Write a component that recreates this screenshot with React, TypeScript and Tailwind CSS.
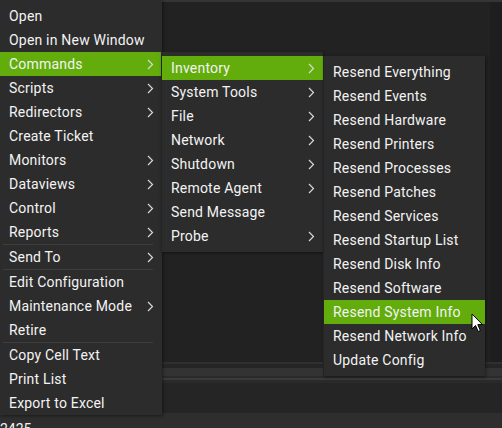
import React from "react";

type Item = { label: string; sub?: boolean; active?: boolean; sepBefore?: boolean };

const mainItems: Item[] = [
  { label: "Open" },
  { label: "Open in New Window" },
  { label: "Commands", sub: true, active: true },
  { label: "Scripts", sub: true },
  { label: "Redirectors", sub: true },
  { label: "Create Ticket" },
  { label: "Monitors", sub: true },
  { label: "Dataviews", sub: true },
  { label: "Control", sub: true },
  { label: "Reports", sub: true },
  { label: "Send To", sub: true, sepBefore: true },
  { label: "Edit Configuration", sepBefore: true },
  { label: "Maintenance Mode", sub: true },
  { label: "Retire" },
  { label: "Copy Cell Text", sepBefore: true },
  { label: "Print List" },
  { label: "Export to Excel" },
];

const commandItems: Item[] = [
  { label: "Inventory", sub: true, active: true },
  { label: "System Tools", sub: true },
  { label: "File", sub: true },
  { label: "Network", sub: true },
  { label: "Shutdown", sub: true },
  { label: "Remote Agent", sub: true },
  { label: "Send Message" },
  { label: "Probe", sub: true },
];

const inventoryItems: Item[] = [
  { label: "Resend Everything" },
  { label: "Resend Events" },
  { label: "Resend Hardware" },
  { label: "Resend Printers" },
  { label: "Resend Processes" },
  { label: "Resend Patches" },
  { label: "Resend Services" },
  { label: "Resend Startup List" },
  { label: "Resend Disk Info" },
  { label: "Resend Software" },
  { label: "Resend System Info", active: true },
  { label: "Resend Network Info" },
  { label: "Update Config" },
];

const Chevron = () => (
  <svg width="7" height="11" viewBox="0 0 7 11" className="shrink-0">
    <polyline points="1,1 5.5,5.5 1,10" fill="none" stroke="#d8d8d8" strokeWidth="1.2" />
  </svg>
);

const MenuRow = ({ item }: { item: Item }) => (
  <>
    {item.sepBefore && <div className="ml-[3px] mr-[9px] h-px bg-[#3d3d3d]" />}
    <div
      className={`flex h-6 items-center justify-between pl-[9px] pr-[8px] ${
        item.active ? "bg-[#62ad0c]" : ""
      }`}
    >
      <span className="whitespace-nowrap">{item.label}</span>
      {item.sub && <Chevron />}
    </div>
  </>
);

const Menu = ({ items, className }: { items: Item[]; className: string }) => (
  <div
    className={`absolute w-[162px] bg-[#2c2c2c] text-[14px] leading-4 tracking-[0.2px] text-[#f3f3f3] shadow-[1px_1px_3px_rgba(0,0,0,0.45)] ${className}`}
  >
    {items.map((item) => (
      <MenuRow key={item.label} item={item} />
    ))}
  </div>
);

const Cursor = () => (
  <svg
    width="14"
    height="21"
    viewBox="0 0 14 21"
    className="absolute left-[471px] top-[313px]"
  >
    <path
      d="M1 1 L1 16 L4.5 12.5 L7.2 18.5 L9.4 17.5 L6.8 11.6 L11.5 11.6 Z"
      fill="#ffffff"
      stroke="#000000"
      strokeWidth="1"
      strokeLinejoin="round"
    />
  </svg>
);

export default function App() {
  return (
    <div
      className="relative h-[428px] w-[502px] overflow-hidden bg-[#212121]"
      style={{ fontFamily: "Roboto, 'Liberation Sans', sans-serif" }}
    >
      {/* app window behind the menus */}
      <div className="flex h-full flex-col">
        <div className="h-[2px] bg-[#353535]" />
        <div className="flex flex-1">
          <div className="flex-1 bg-[#222222]" />
          <div className="w-[12px] bg-[#1e1e1e]" />
        </div>
        <div className="h-[2px] bg-[#2f2f2f]" />
        <div className="h-[4px] bg-[#252525]" />
        <div className="h-[8px] bg-[#333333]" />
        <div className="h-[2px] bg-[#2a2a2a]" />
        <div className="h-[2px] bg-[#3a3a3a]" />
        <div className="h-[3px] bg-[#2a2a2a]" />
        <div className="h-[30px] bg-[#252525]" />
        <div className="h-[15px] bg-[#2e2e2e] pt-[8px] text-[14px] leading-4 text-[#f1f1f1]">
          2425
        </div>
      </div>

      <Menu items={mainItems} className="left-0 top-0 w-[161px] pt-[4px]" />
      <Menu
        items={commandItems}
        className="left-[161px] top-[52px] border-l border-[#242424] py-[4px]"
      />
      <Menu
        items={inventoryItems}
        className="left-[323px] top-[56px] border-l border-[#242424] py-[4px]"
      />

      <Cursor />
    </div>
  );
}
